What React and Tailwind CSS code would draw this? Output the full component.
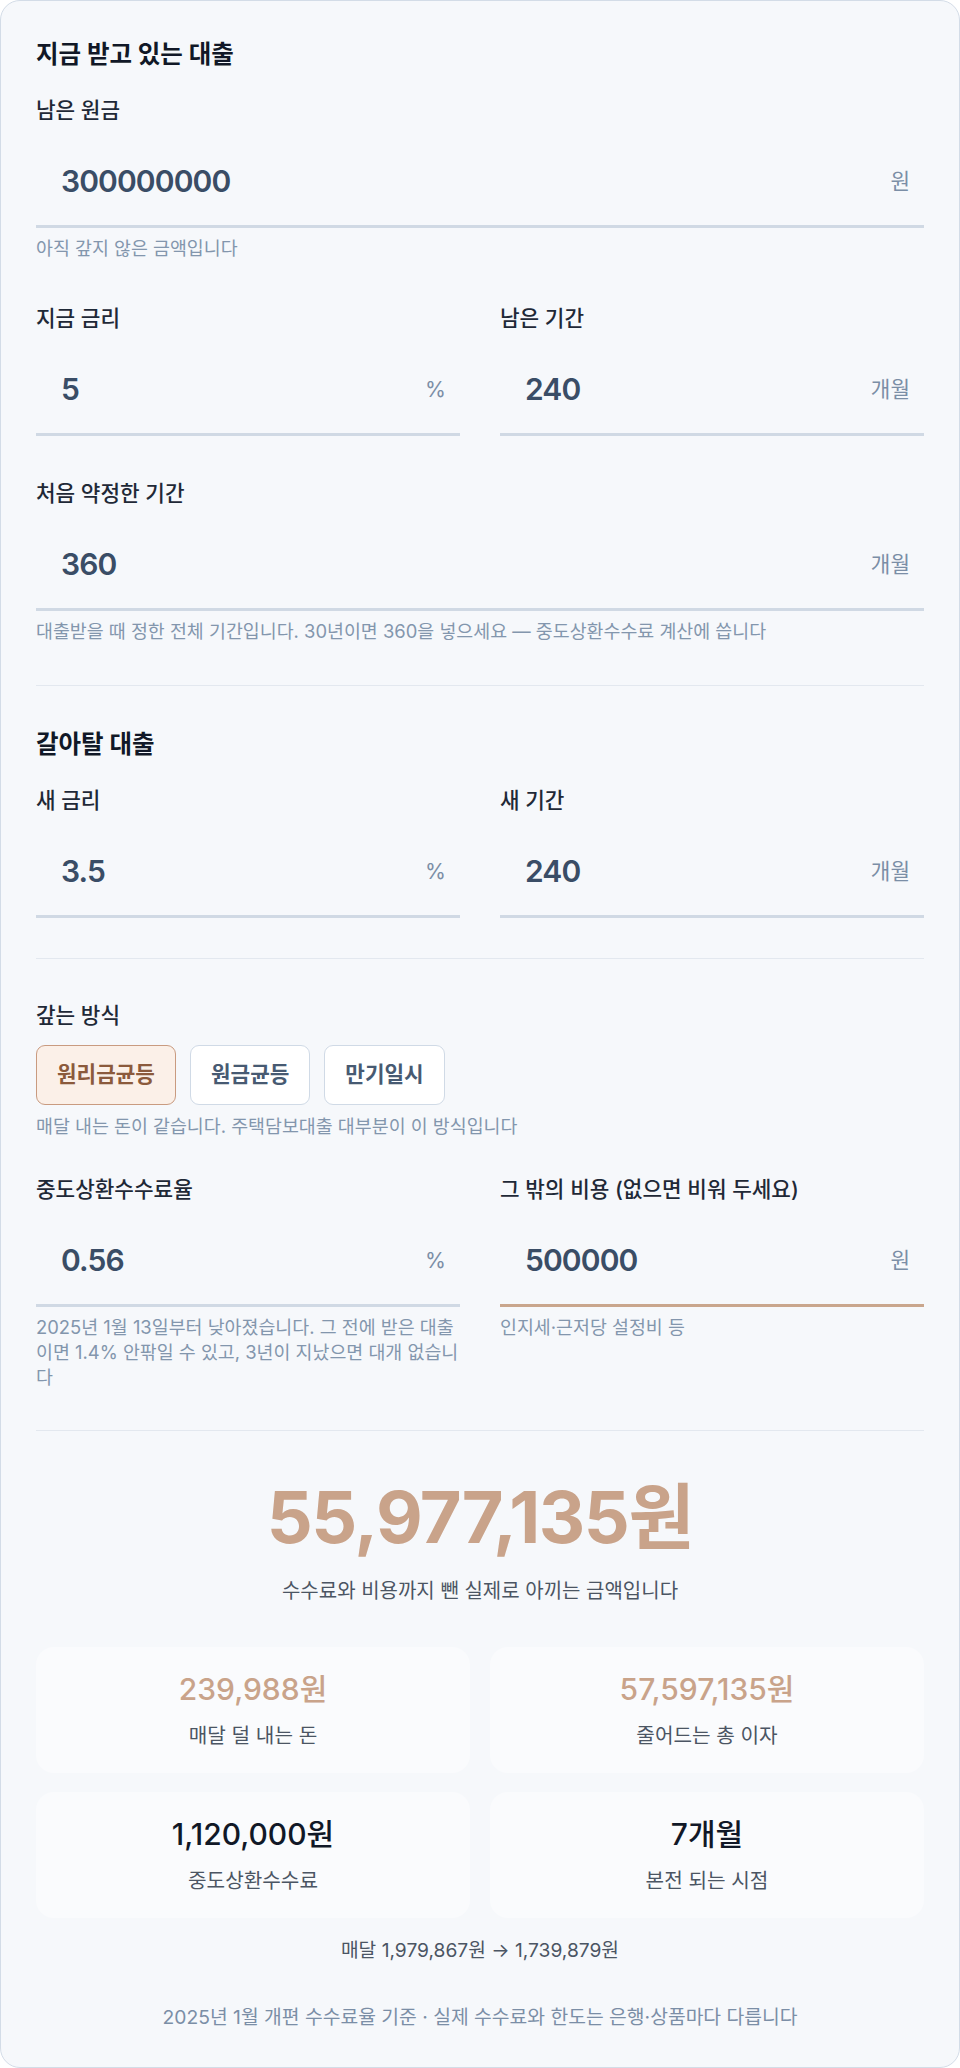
import React, { useState } from "react";

const Field = ({ label, value, unit, helper, active, gap = "mt-[13px]" }) => (
  <div>
    <div className="text-[21.3px] leading-[28px] font-medium text-[#1f2937]">
      {label}
    </div>
    <div
      className={`${gap} flex items-center border-b-[3px] py-6 pl-[25px] pr-[14px] ${
        active ? "border-[#c9a68d]" : "border-[#d0d9e4]"
      }`}>
      <input
        readOnly
        value={value}
        className="min-w-0 flex-1 bg-transparent text-[30px] leading-[40px] font-semibold tracking-[-0.03em] text-[#3a4d66] outline-none"
      />
      <span className="text-[21.3px] leading-[28px] text-[#7b8ea6]">{unit}</span>
    </div>
    {helper && (
      <p className="mt-[8px] text-[18.4px] leading-[25px] text-[#8396ad]">
        {helper}
      </p>
    )}
  </div>
);

const Stat = ({ value, label, accent }) => (
  <div className="rounded-[18px] bg-[#fafbfd] px-4 py-6 text-center">
    <div
      className={`text-[30px] leading-[36px] font-medium ${
        accent ? "text-[#c9a38a]" : "text-[#111827]"
      }`}>
      {value}
    </div>
    <div className="mt-4 text-[20.2px] leading-[26px] text-[#4b5563]">{label}</div>
  </div>
);

const methods = ["원리금균등", "원금균등", "만기일시"];

export default function App() {
  const [method, setMethod] = useState("원리금균등");

  return (
    <div className="min-h-screen bg-white font-['Inter','Noto_Sans_CJK_KR',sans-serif]">
      <div className="rounded-[20px] border border-[#d3dce7] bg-[#f6f8fb] px-[35px] pt-[37px] pb-[37px]">
        {/* 지금 대출 */}
        <section className="pb-[41px]">
          <h2 className="text-[24.5px] leading-[32px] font-bold text-[#111827]">
            지금 받고 있는 대출
          </h2>
          <div className="mt-[26px]">
            <Field
              label="남은 원금"
              value="300000000"
              unit="원"
              helper="아직 갚지 않은 금액입니다"
            />
          </div>
          <div className="mt-[43px] grid grid-cols-2 gap-x-10">
            <Field label="지금 금리" value="5" unit="%" />
            <Field label="남은 기간" value="240" unit="개월" />
          </div>
          <div className="mt-[43px]">
            <Field
              label="처음 약정한 기간"
              value="360"
              unit="개월"
              helper="대출받을 때 정한 전체 기간입니다. 30년이면 360을 넣으세요 — 중도상환수수료 계산에 씁니다"
            />
          </div>
        </section>

        {/* 갈아탈 대출 */}
        <section className="border-t border-[#e3e8ef] pt-[42px] pb-[40px]">
          <h2 className="text-[24.5px] leading-[32px] font-bold text-[#111827]">
            갈아탈 대출
          </h2>
          <div className="mt-[26px] grid grid-cols-2 gap-x-10">
            <Field label="새 금리" value="3.5" unit="%" />
            <Field label="새 기간" value="240" unit="개월" />
          </div>
        </section>

        {/* 갚는 방식 + 비용 */}
        <section className="border-t border-[#e3e8ef] pt-[42px] pb-[40px]">
          <div className="text-[21.3px] leading-[28px] font-medium text-[#1f2937]">
            갚는 방식
          </div>
          <div className="mt-4 flex gap-[14px]">
            {methods.map((m) => (
              <button
                key={m}
                onClick={() => setMethod(m)}
                className={`h-[60px] rounded-[9px] border px-[20px] text-[21.3px] font-semibold ${
                  method === m
                    ? "border-[#c99b80] bg-[#fbf0e8] text-[#8b5a3c]"
                    : "border-[#d0dae6] bg-white text-[#475a72]"
                }`}>
                {m}
              </button>
            ))}
          </div>
          <p className="mt-[9px] text-[18.4px] leading-[25px] text-[#8396ad]">
            매달 내는 돈이 같습니다. 주택담보대출 대부분이 이 방식입니다
          </p>

          <div className="mt-[36px] grid grid-cols-2 gap-x-10">
            <Field
              label="중도상환수수료율"
              value="0.56"
              unit="%"
              helper="2025년 1월 13일부터 낮아졌습니다. 그 전에 받은 대출이면 1.4% 안팎일 수 있고, 3년이 지났으면 대개 없습니다"
            />
            <Field
              label="그 밖의 비용 (없으면 비워 두세요)"
              value="500000"
              unit="원"
              active
              helper="인지세·근저당 설정비 등"
            />
          </div>
        </section>

        {/* 결과 */}
        <section className="border-t border-[#e3e8ef] pt-[46px]">
          <div className="text-center text-[72px] leading-[80px] font-bold tracking-[-0.02em] text-[#c9a38a]">
            55,977,135원
          </div>
          <p className="mt-[21px] text-center text-[20px] leading-[26px] text-[#4b5563]">
            수수료와 비용까지 뺀 실제로 아끼는 금액입니다
          </p>

          <div className="mt-[43px] grid grid-cols-2 gap-x-5 gap-y-[19px]">
            <Stat value="239,988원" label="매달 덜 내는 돈" accent />
            <Stat value="57,597,135원" label="줄어드는 총 이자" accent />
            <Stat value="1,120,000원" label="중도상환수수료" />
            <Stat value="7개월" label="본전 되는 시점" />
          </div>

          <p className="mt-[19px] text-center text-[19.2px] leading-[26px] text-[#4b5563]">
            매달 1,979,867원 → 1,739,879원
          </p>
          <p className="mt-[41px] text-center text-[19.3px] leading-[26px] text-[#7b8ea6]">
            2025년 1월 개편 수수료율 기준 · 실제 수수료와 한도는 은행·상품마다
            다릅니다
          </p>
        </section>
      </div>
    </div>
  );
}
